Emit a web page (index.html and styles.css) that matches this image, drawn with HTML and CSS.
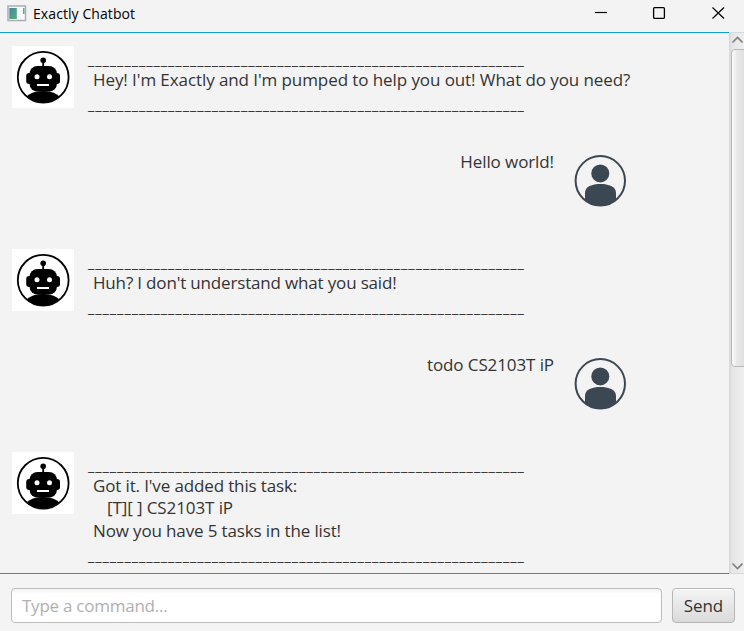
FILE: index.html
```html
<!DOCTYPE html>
<html lang="en">
<head>
<meta charset="utf-8">
<title>Exactly Chatbot</title>
<link rel="stylesheet" href="styles.css">
</head>
<body>
<svg class="defs" width="0" height="0">
  <symbol id="bot" viewBox="0 0 62 62">
    <rect width="62" height="62" fill="#fff"/>
    <clipPath id="bot-clip"><circle cx="31" cy="31" r="25.5"/></clipPath>
    <circle cx="31.2" cy="31.2" r="25.4" fill="none" stroke="#000" stroke-width="1.8"/>
    <ellipse cx="31" cy="56" rx="19" ry="11" clip-path="url(#bot-clip)"/>
    <rect x="17.500" y="20" width="27.500" height="25.500" rx="8"/>
    <rect x="14.200" y="27" width="33.800" height="11" rx="3"/>
    <rect x="30.3" y="15" width="1.8" height="6"/>
    <circle cx="31.2" cy="14.3" r="2.8"/>
    <circle cx="25" cy="30.7" r="2.5" fill="#fff"/>
    <circle cx="37.5" cy="30.7" r="2.5" fill="#fff"/>
    <rect x="25" y="38" width="12" height="2" fill="#fff"/>
  </symbol>
  <symbol id="user" viewBox="0 0 62 62">
    <clipPath id="user-clip"><circle cx="31.300" cy="30.800" r="25"/></clipPath>
    <circle cx="31.300" cy="30.800" r="24.7" fill="none" stroke="#3b4752" stroke-width="2"/>
    <circle cx="31.300" cy="23.4" r="9" fill="#3b4752"/>
    <path d="M16 58V43C16 36.500 23 34 31.300 34S47 36.500 47 43V58Z" fill="#3b4752" clip-path="url(#user-clip)"/>
  </symbol>
</svg>
<div class="window">
  <header class="titlebar">
    <svg class="app-icon" width="20" height="17" viewBox="0 0 20 17">
      <defs><linearGradient id="app" x1="0" y1="0" x2="1" y2="1"><stop offset="0" stop-color="#4585a0"/><stop offset="1" stop-color="#58b078"/></linearGradient></defs>
      <rect x="1" y="1" width="17.500" height="14.500" fill="#f8f9fb" stroke="#a9adb5" stroke-width="1.500"/>
      <rect x="2.300" y="3" width="7.500" height="11" fill="url(#app)"/>
      <rect x="16" y="3" width="1.500" height="6" fill="#5ba59a"/>
    </svg>
    <span class="title">Exactly Chatbot</span>
    <svg class="controls" width="130" height="13" viewBox="0 0 130 13" fill="none" stroke="#000">
      <path d="M0 6.500H12" stroke-width="1.200"/>
      <rect x="58.600" y="1.600" width="10.800" height="10.800" rx="1" stroke-width="1.300"/>
      <path d="M117.500 1.500L129 12.500M129 1.500L117.500 12.500" stroke-width="1.200"/>
    </svg>
  </header>
  <main class="scroll">
    <div class="messages">
      <div class="row bot">
        <svg class="avatar"><use href="#bot"/></svg>
        <div class="text"><div class="rule">____________________________________________________________</div><div class="l1">Hey! I'm Exactly and I'm pumped to help you out! What do you need?</div><div class="rule">____________________________________________________________</div></div>
      </div>
      <div class="row user">
        <div class="text l2">Hello world!</div>
        <svg class="avatar"><use href="#user"/></svg>
      </div>
      <div class="row bot">
        <svg class="avatar"><use href="#bot"/></svg>
        <div class="text"><div class="rule">____________________________________________________________</div><div class="l3">Huh? I don't understand what you said!</div><div class="rule">____________________________________________________________</div></div>
      </div>
      <div class="row user">
        <div class="text l4">todo CS2103T iP</div>
        <svg class="avatar"><use href="#user"/></svg>
      </div>
      <div class="row bot">
        <svg class="avatar"><use href="#bot"/></svg>
        <div class="text"><div class="rule">____________________________________________________________</div><div class="l5">Got it. I've added this task:</div><div class="l6">[T][ ] CS2103T iP</div><div class="l7">Now you have 5 tasks in the list!</div><div class="rule">____________________________________________________________</div></div>
      </div>
    </div>
    <div class="scrollbar">
      <svg class="arrow" width="14" height="16" viewBox="0 0 14 16"><path d="M3.500 9.500L8.500 4.500L13.500 9.500" fill="none" stroke="#808080" stroke-width="1.600"/></svg>
      <div class="track"><div class="thumb"></div></div>
      <svg class="arrow" width="14" height="14" viewBox="0 0 14 14"><path d="M3.500 4.500L8.500 9.500L13.500 4.500" fill="none" stroke="#808080" stroke-width="1.600"/></svg>
    </div>
  </main>
  <footer class="composer">
    <input class="field" type="text" placeholder="Type a command...">
    <button class="send">Send</button>
  </footer>
</div>
</body>
</html>
```
FILE: styles.css
```css
* { box-sizing: border-box; }
body { margin: 0; font-family: "Open Sans", "Noto Sans", sans-serif; color: #333; background: #f3f3f3; }
.defs { position: absolute; }
.window { width: 744px; height: 631px; display: flex; flex-direction: column; overflow: hidden; background: #f4f4f4; }
.titlebar { height: 32px; flex: none; display: flex; align-items: flex-start; padding: 5px 19px 0 7px; background: #f3f3f3; color: #000; }
.app-icon { flex: none; }
.title { margin-left: 6px; font-size: 14px; line-height: 18px; letter-spacing: 0.08px; flex: 1; }
.controls { margin: 1px 0 0; flex: none; }
.scroll { height: 542px; flex: none; display: flex; }
.messages { flex: 1; min-width: 0; border-top: 1px solid #0d9fd3; border-bottom: 1px solid #0d9fd3; padding: 13px 98px 0 12px; background: #f3f3f3; overflow: hidden; }
.row { display: flex; align-items: flex-start; }
.row.bot { height: 104px; }
.row.user { height: 99px; justify-content: flex-end; }
.row:last-child { height: 123px; }
.avatar { width: 62px; height: 62px; flex: none; }
.text { font-size: 17px; font-weight: 400; line-height: 22.5px; letter-spacing: -0.1px; white-space: pre; }
.bot .text { margin-left: 14px; }
.bot .text div { padding-left: 5px; }
.bot .text .l6 { padding-left: 19px; }
.bot .text .rule { height: 22.5px; padding: 3px 0 0; font-size: 14.5px; letter-spacing: 0.93px; }
.l1 { letter-spacing: -0.085px; }
.l3 { letter-spacing: -0.17px; }
.l5, .l7 { letter-spacing: -0.14px; }
.user .text { margin-right: 15px; padding-top: 0.6px; }
.scrollbar { width: 15px; flex: none; display: flex; flex-direction: column; background: linear-gradient(90deg, #d6d6d6, #e6e6e6 3px, #eee); border-top: 1px solid #d2dce0; border-bottom: 1px solid #bfe0ee; }
.arrow { flex: none; }
.track { flex: 1; padding-left: 2px; overflow: hidden; }
.thumb { width: 16px; height: 318px; border: 1px solid #b8b8b8; border-radius: 4px; background: linear-gradient(90deg, #fafafa, #e8e8e8 5px, #dedede); }
.composer { flex: 1; display: flex; align-items: flex-start; gap: 10px; padding: 14px 9px 0 11px; }
.field { flex: 1; height: 35px; min-width: 0; padding: 0 10px; border: 1px solid #bcbcbc; border-radius: 4px; background: linear-gradient(#f3f3f3, #fff 5px); font: 400 17px "Open Sans", sans-serif; letter-spacing: -0.25px; }
.field::placeholder { color: #b0b0b0; opacity: 1; }
.send { width: 63px; height: 35px; padding: 0; border: 1px solid #b6b6b6; border-radius: 4px; background: linear-gradient(#f4f4f4, #dadada); box-shadow: inset 0 1px #fff; font: 400 17px "Open Sans", sans-serif; letter-spacing: -0.1px; color: #333; }
```
